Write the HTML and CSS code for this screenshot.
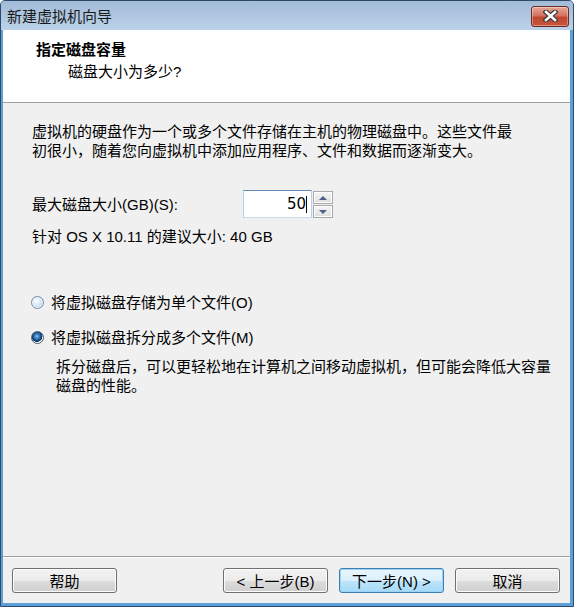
FILE: index.html
```html
<!DOCTYPE html>
<html lang="zh-CN">
<head>
  <meta charset="UTF-8" />
  <title>新建虚拟机向导</title>
  <link rel="stylesheet" href="styles.css">
</head>
<body>

  <!-- Window frame -->
  <div class="window">
    <div class="titlebar">
      <span class="title">新建虚拟机向导</span>
      <button class="close-btn" aria-label="关闭">
        <svg width="15" height="12" viewBox="0 0 15 12">
          <path d="M3 2 L12 10 M12 2 L3 10" stroke="#3a3a3a" stroke-width="5" stroke-linecap="square" fill="none"/>
          <path d="M3 2 L12 10 M12 2 L3 10" stroke="#ffffff" stroke-width="2.6" stroke-linecap="square" fill="none"/>
        </svg>
      </button>
    </div>

    <div class="client">
      <!-- Wizard header -->
      <div class="wizard-header">
        <div class="wizard-title">指定磁盘容量</div>
        <div class="wizard-subtitle">磁盘大小为多少?</div>
      </div>

      <!-- Page content -->
      <div class="wizard-body">
        <p class="intro">虚拟机的硬盘作为一个或多个文件存储在主机的物理磁盘中。这些文件最<br>初很小，随着您向虚拟机中添加应用程序、文件和数据而逐渐变大。</p>

        <div class="size-row">
          <label class="size-label">最大磁盘大小(GB)(S):</label>
          <div class="spin-box">
            <div class="spin-input">50<span class="caret"></span></div>
            <div class="spin-buttons">
              <span class="spin-btn"><span class="arrow-up"></span></span>
              <span class="spin-btn"><span class="arrow-down"></span></span>
            </div>
          </div>
        </div>

        <p class="hint">针对 OS X 10.11 的建议大小: 40 GB</p>

        <div class="radio-row first">
          <span class="radio"></span>
          <span>将虚拟磁盘存储为单个文件(O)</span>
        </div>
        <div class="radio-row">
          <span class="radio checked"></span>
          <span>将虚拟磁盘拆分成多个文件(M)</span>
        </div>
        <p class="radio-desc">拆分磁盘后，可以更轻松地在计算机之间移动虚拟机，但可能会降低大容量<br>磁盘的性能。</p>
      </div>

      <!-- Buttons -->
      <div class="wizard-footer">
        <button class="btn">帮助</button>
        <button class="btn push">&lt; 上一步(B)</button>
        <button class="btn default">下一步(N) &gt;</button>
        <button class="btn">取消</button>
      </div>
    </div>
  </div>

</body>
</html>
```

FILE: styles.css
```css
/* Global */
* {
  box-sizing: border-box;
}
body {
  margin: 0;
  width: 574px;
  height: 607px;
  font-family: 'Liberation Sans', 'Noto Sans CJK SC', sans-serif;
  font-size: 15px;
  color: #000;
  background: #fff;
  overflow: hidden;
}
p {
  margin: 0;
}
/* Window frame */
.window {
  height: 607px;
  display: flex;
  flex-direction: column;
  border: 1px solid #2d4a6a;
  border-radius: 5px 5px 0 0;
  background: #5d9fd8;
}
.titlebar {
  height: 29px;
  flex-shrink: 0;
  display: flex;
  align-items: center;
  justify-content: space-between;
  padding: 1px 4px 0 6px;
  background: linear-gradient(#a2bbd7, #bbd2ea);
  border-radius: 4px 4px 0 0;
}
.title {
  font-size: 15px;
  color: #1a1a1a;
  line-height: 19px;
}
.close-btn {
  width: 38px;
  height: 21px;
  padding: 0;
  display: flex;
  align-items: center;
  justify-content: center;
  border: 1px solid #6b2c22;
  border-radius: 3px;
  background: linear-gradient(#e7a898 0%, #d4735f 45%, #c0472f 55%, #c8553c 100%);
  box-shadow: inset 0 0 0 1px rgba(255, 255, 255, 0.35);
}
/* Client area */
.client {
  flex: 1;
  margin: 0 3px 3px 2px;
  display: flex;
  flex-direction: column;
  background: #f0f0f0;
}
.wizard-header {
  height: 73px;
  flex-shrink: 0;
  background: #fff;
  border-bottom: 1px solid #a0a0a0;
  padding-top: 10px;
  line-height: 19px;
}
.wizard-title {
  font-weight: bold;
  padding-left: 33px;
}
.wizard-subtitle {
  padding-left: 65px;
  margin-top: 3px;
}
.wizard-body {
  flex: 1;
  padding: 19px 0 0 29px;
  line-height: 19px;
}
/* Size field */
.size-row {
  display: flex;
  align-items: center;
  margin-top: 30px;
  height: 28px;
}
.size-label {
  width: 211px;
}
.spin-box {
  display: flex;
  height: 28px;
}
.spin-input {
  width: 69px;
  height: 28px;
  border: 1px solid;
  border-color: #5f8bb6 #b7d0e7 #c6dbee #b7d0e7;
  background: #fff;
  display: flex;
  align-items: center;
  justify-content: flex-end;
  padding-right: 4px;
  font-family: 'DejaVu Sans', 'Noto Sans CJK SC', sans-serif;
  font-size: 15px;
}
.caret {
  width: 1px;
  height: 17px;
  background: #000;
}
.spin-buttons {
  width: 20px;
  margin-left: 1px;
  display: flex;
  flex-direction: column;
  gap: 1px;
  padding-top: 1px;
}
.spin-btn {
  flex: 1;
  display: flex;
  align-items: center;
  justify-content: center;
  border: 1px solid #a9a9a9;
  background: linear-gradient(#f6f6f6, #dedede);
  box-shadow: inset 0 0 0 1px #fff;
}
.arrow-up {
  border-left: 4px solid transparent;
  border-right: 4px solid transparent;
  border-bottom: 4px solid #4a5f8c;
}
.arrow-down {
  border-left: 4px solid transparent;
  border-right: 4px solid transparent;
  border-top: 4px solid #4a5f8c;
}
.hint {
  margin-top: 9px;
}
/* Radio options */
.radio-row {
  display: flex;
  align-items: center;
  margin-left: -1px;
  margin-top: 16px;
}
.radio-row.first {
  margin-top: 47px;
}
.radio {
  flex-shrink: 0;
  width: 13px;
  height: 13px;
  margin-right: 7px;
  border-radius: 50%;
  border: 1px solid #6f89aa;
  background: radial-gradient(circle at 40% 35%, #ffffff 0%, #d9e7f6 45%, #a9c6e6 100%);
  box-shadow: inset 0 0 0 1px #eef4fa;
}
.radio.checked {
  border-color: #4e5e70;
  box-shadow: none;
  background: radial-gradient(circle at 45% 40%, #7dbcf0 0%, #1f5e9c 40%, #0d2f5a 58%, #ffffff 64%, #e3ebf4 100%);
}
.radio-desc {
  padding-left: 24px;
  margin-top: 10px;
}
/* Footer buttons */
.wizard-footer {
  height: 47px;
  flex-shrink: 0;
  display: flex;
  align-items: flex-start;
  gap: 11px;
  padding: 11px 10px 0 9px;
  border-top: 1px solid #a0a0a0;
  box-shadow: inset 0 1px 0 #fff;
}
.btn {
  width: 105px;
  height: 25px;
  padding: 0;
  font-family: 'Liberation Sans', 'Noto Sans CJK SC', sans-serif;
  font-size: 15px;
  color: #000;
  border: 1px solid #707070;
  border-radius: 3px;
  background: linear-gradient(#f2f2f2 0%, #ebebeb 50%, #dddddd 50%, #cfcfcf 100%);
  box-shadow: inset 0 0 0 1px #fcfcfc;
}
.btn.push {
  margin-left: auto;
}
.btn.default {
  border-color: #3c7fb1;
  background: linear-gradient(#eaf6fd 0%, #d9f0fc 50%, #bee6fd 50%, #a7d9f5 100%);
  box-shadow: inset 0 0 0 1px #9ad3f5;
}
```
